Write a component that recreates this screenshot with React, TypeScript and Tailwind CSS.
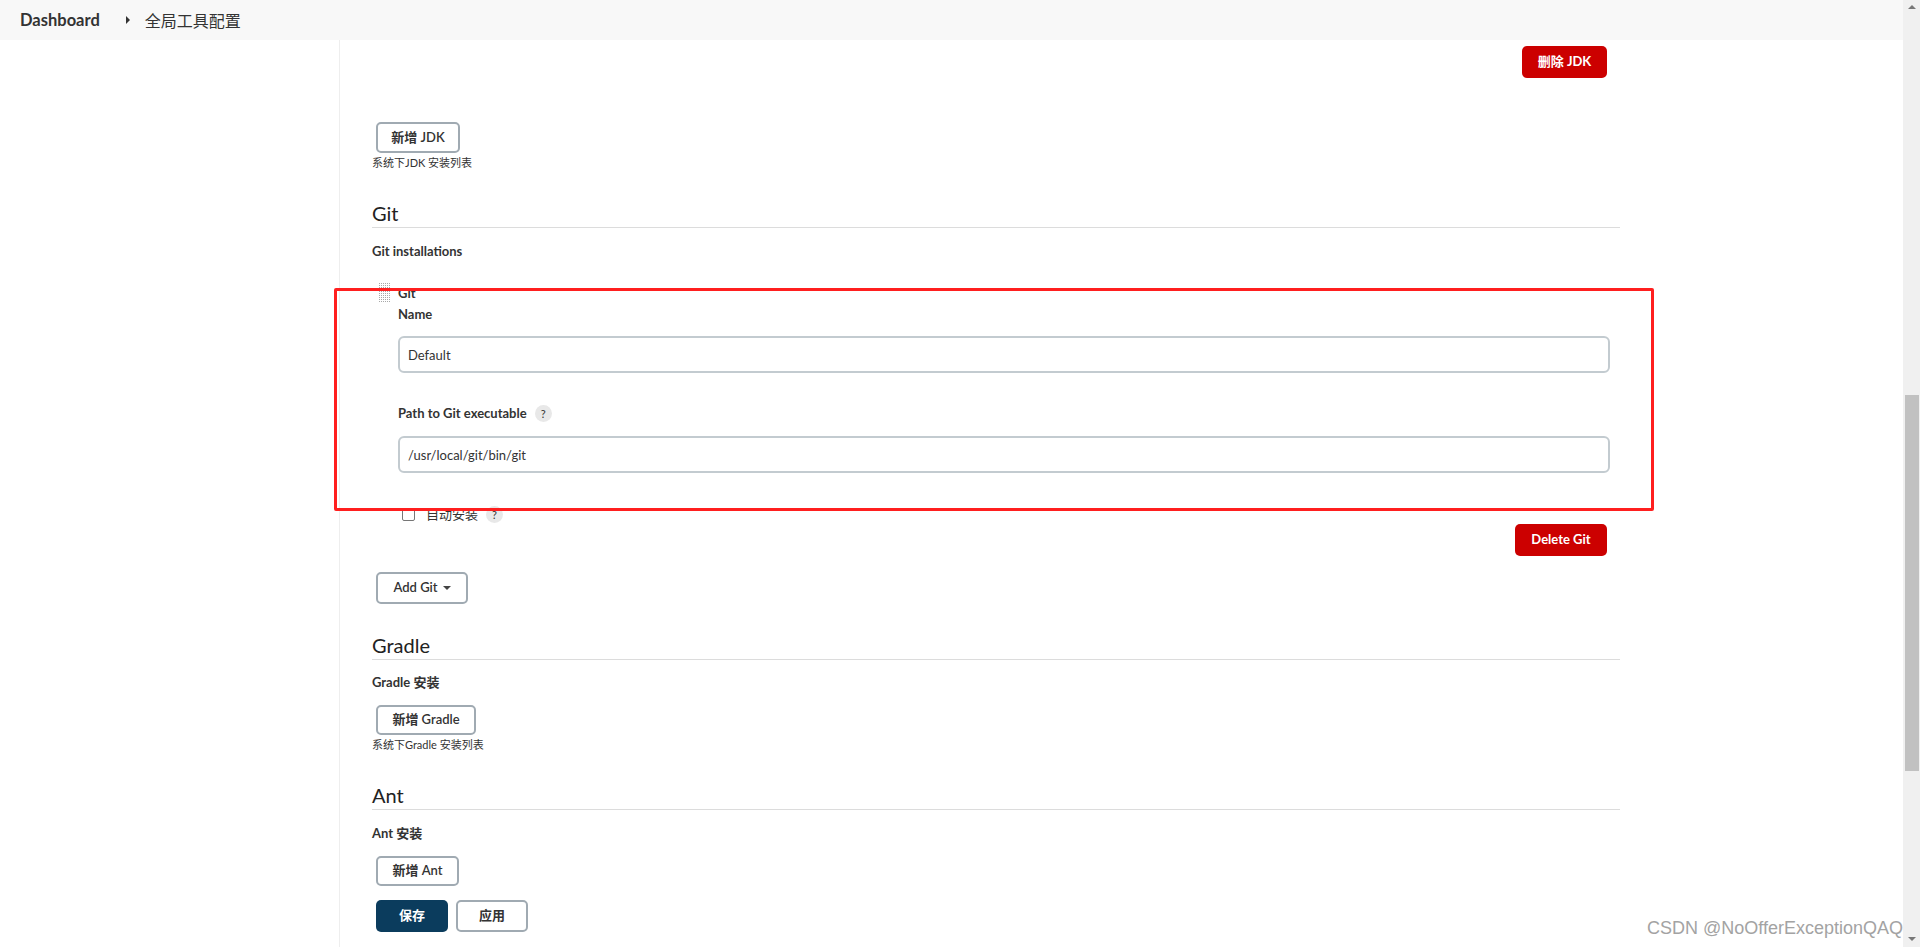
import React from 'react';

function HelpBadge() {
  return (
    <span className="ml-[8px] inline-flex h-[17px] w-[17px] items-center justify-center rounded-full bg-[#e8e8e8] text-[11px] font-normal leading-none text-[#333]">
      ?
    </span>
  );
}

function OutlineButton({ label, w, h = 'h-[31px]', caret = false }: { label: string; w: string; h?: string; caret?: boolean }) {
  return (
    <button
      className={`${w} ${h} ml-[4px] inline-flex items-center justify-center rounded-[5px] border-2 border-[#a0aab2] bg-white text-[13px] font-semibold text-[#333]`}
    >
      {label}
      {caret && <span className="ml-[5px] inline-block h-0 w-0 border-x-[4px] border-t-[4px] border-x-transparent border-t-[#444]" />}
    </button>
  );
}

function DangerButton({ label, w }: { label: string; w: string }) {
  return (
    <button className={`${w} h-[32px] rounded-[5px] bg-[#cc0000] text-[13px] font-bold text-white`}>{label}</button>
  );
}

function SectionHeading({ title, mt }: { title: string; mt: string }) {
  return (
    <h2 className={`${mt} border-b border-[#dcdcdc] text-[20px] font-normal leading-[28px] text-[#222]`}>{title}</h2>
  );
}

function DragHandle() {
  const dots = [];
  for (let r = 0; r < 10; r++) {
    for (let c = 0; c < 6; c++) {
      dots.push(<rect key={`${r}-${c}`} x={c * 2} y={r * 2} width="1" height="1" fill="#a8a8a8" />);
    }
  }
  return (
    <svg width="11" height="20" viewBox="0 0 11 20" className="ml-[7px] shrink-0">
      {dots}
    </svg>
  );
}

function Scrollbar() {
  return (
    <div className="flex w-[17px] shrink-0 flex-col items-center bg-[#f0f0f0]">
      <div className="mt-[5px] h-0 w-0 border-x-[4px] border-b-[4px] border-x-transparent border-b-[#777]" />
      <div className="mt-[386px] ml-[2px] h-[376px] w-[14px] self-start bg-[#c1c1c1]" />
      <div className="mt-[166px] h-0 w-0 border-x-[4px] border-t-[4px] border-x-transparent border-t-[#777]" />
    </div>
  );
}

export default function App() {
  return (
    <div className="flex h-[947px] w-[1920px] overflow-hidden bg-white font-['Lato','Noto_Sans_CJK_SC',sans-serif] text-[#333]">
      <div className="relative flex min-w-0 flex-1 flex-col">
        <header className="flex h-[40px] shrink-0 items-center bg-[#f8f8f8] pl-[20px]">
          <span className="text-[16.5px] font-bold text-[#333]">Dashboard</span>
          <span className="ml-[26px] inline-block h-0 w-0 border-y-[4px] border-l-[4px] border-y-transparent border-l-[#333]" />
          <span className="ml-[15px] font-['Noto_Sans_CJK_SC',sans-serif] text-[16px] text-[#333]">全局工具配置</span>
        </header>

        <div className="flex flex-1">
          <aside className="w-[340px] shrink-0 border-r border-[#eeeeee]" />

          <main className="ml-[32px] flex w-[1248px] flex-col items-stretch">
            {/* JDK (tail end) */}
            <div className="mt-[6px] flex justify-end pr-[13px]">
              <DangerButton label="删除 JDK" w="w-[85px]" />
            </div>
            <div className="mt-[44px]">
              <OutlineButton label="新增 JDK" w="w-[84px]" />
            </div>
            <div className="text-[11px] leading-[20px] text-[#333]">系统下JDK 安装列表</div>

            {/* Git */}
            <SectionHeading title="Git" mt="mt-[26px]" />
            <div className="mt-[13px] text-[13px] font-bold leading-[20px]">Git installations</div>

            <div className="mt-[22px] flex pr-[10px]">
              <DragHandle />
              <div className="ml-[8px] flex flex-1 flex-col">
                <div className="text-[13px] font-bold leading-[20px]">Git</div>
                <div className="text-[13px] font-bold leading-[22px]">Name</div>
                <input
                  readOnly
                  value="Default"
                  className="mt-[11px] h-[37px] rounded-[6px] border-2 border-[#c3cbd0] px-[8px] text-[13px] text-[#333] outline-none"
                />
                <div className="mt-[30px] flex items-center text-[13px] font-bold leading-[20px]">
                  Path to Git executable
                  <HelpBadge />
                </div>
                <input
                  readOnly
                  value="/usr/local/git/bin/git"
                  className="mt-[13px] h-[37px] rounded-[6px] border-2 border-[#c3cbd0] px-[8px] text-[13px] text-[#333] outline-none"
                />
                <div className="mt-[32px] flex h-[18px] items-center">
                  <span className="ml-[4px] h-[13px] w-[13px] rounded-[2px] border border-[#767676] bg-white" />
                  <span className="ml-[11px] font-['Noto_Sans_CJK_SC',sans-serif] text-[13px] text-[#333]">自动安装</span>
                  <HelpBadge />
                </div>
                <div className="mt-[1px] flex justify-end pr-[3px]">
                  <DangerButton label="Delete Git" w="w-[92px]" />
                </div>
              </div>
            </div>

            <div className="mt-[16px]">
              <OutlineButton label="Add Git" w="w-[92px]" h="h-[32px]" caret />
            </div>

            {/* Gradle */}
            <SectionHeading title="Gradle" mt="mt-[27px]" />
            <div className="mt-[12px] text-[13px] font-bold leading-[20px]">Gradle 安装</div>
            <div className="mt-[13px]">
              <OutlineButton label="新增 Gradle" w="w-[100px]" h="h-[30px]" />
            </div>
            <div className="text-[11px] leading-[20px] text-[#333]">系统下Gradle 安装列表</div>

            {/* Ant */}
            <SectionHeading title="Ant" mt="mt-[26px]" />
            <div className="mt-[13px] text-[13px] font-bold leading-[20px]">Ant 安装</div>
            <div className="mt-[13px]">
              <OutlineButton label="新增 Ant" w="w-[83px]" h="h-[30px]" />
            </div>

            <div className="mt-[14px] ml-[4px] flex gap-[8px]">
              <button className="h-[32px] w-[72px] rounded-[5px] bg-[#0b3c5d] text-[13px] font-bold text-white">保存</button>
              <button className="h-[32px] w-[72px] rounded-[5px] border-2 border-[#a0aab2] bg-white text-[13px] font-semibold text-[#333]">应用</button>
            </div>
          </main>
        </div>

        {/* annotation box drawn over the screenshot */}
        <div className="pointer-events-none absolute left-[334px] top-[288px] h-[223px] w-[1320px] rounded-[2px] border-[3px] border-[#ff1f1f]" />

        {/* watermark */}
        <div className="pointer-events-none absolute right-[0px] top-[917px] font-['Liberation_Sans',sans-serif] text-[18px] leading-[22px] text-[#a3a3a3]">
          CSDN @NoOfferExceptionQAQ
        </div>
      </div>
      <Scrollbar />
    </div>
  );
}
